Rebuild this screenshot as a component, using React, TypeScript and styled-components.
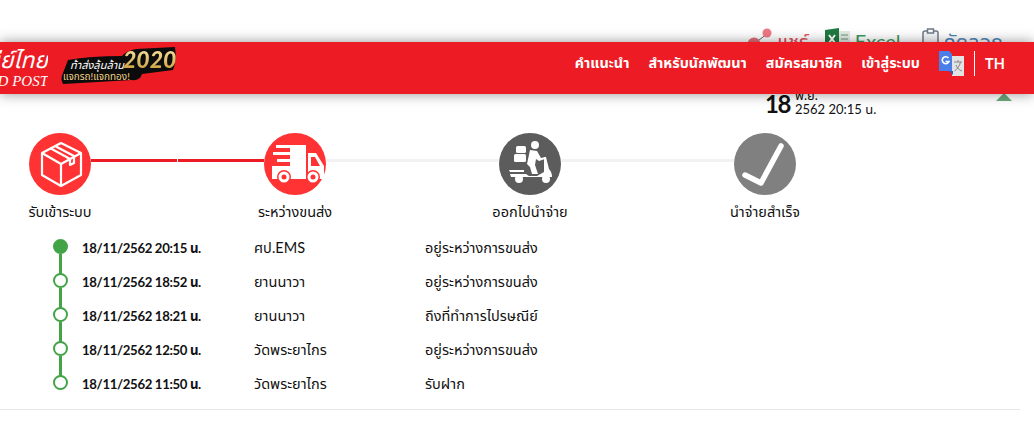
import styled, { createGlobalStyle } from 'styled-components'

const GlobalStyle = createGlobalStyle`
	html, body {
		margin: 0;
		padding: 0;
		background: #fff;
		overflow: hidden;
		font-family: "Lato", "Noto Sans Thai", "Noto Sans", "DejaVu Sans", sans-serif;
		color: #111;
	}
`

const Page = styled.div`
	position: relative;
	height: 428px;
	overflow: hidden;
`

const Header = styled.header`
	position: absolute;
	top: 42px;
	left: 0;
	right: 0;
	z-index: 5;
	height: 52px;
	background: #ed1c24;
	box-shadow: 0 0 12px rgba(0, 0, 0, 0.42);
	display: flex;
	align-items: flex-start;
	justify-content: space-between;
	color: #fff;
`

const Brand = styled.div`
	display: flex;
	align-items: flex-start;
	padding-top: 5px;
	gap: 12px;
`

const Logo = styled.div`
	width: 48px;
	height: 40px;
	overflow: hidden;
	direction: rtl;
	font-family: "Liberation Serif", "Noto Sans Thai", serif;
	font-style: italic;
	white-space: nowrap;
`

const LogoThai = styled.div`
	font-size: 23px;
	line-height: 28px;
`

const LogoEn = styled.div`
	font-size: 15px;
	line-height: 12px;
`

const Nav = styled.nav`
	display: flex;
	align-items: center;
	height: 42px;
	font-size: 14.4px;
	font-weight: 700;
`

const NavItem = styled.a`
	margin-right: 19px;
	white-space: nowrap;
`

const Lang = styled.span`
	margin-left: 10px;
	padding-left: 10px;
	border-left: 1px solid #fff;
	height: 25px;
	line-height: 25px;
	width: 60px;
	box-sizing: border-box;
`

const Toolbar = styled.div`
	height: 42px;
	display: flex;
	align-items: flex-end;
	padding-right: 31px;
	font-size: 20px;
	line-height: 24px;
	overflow: hidden;
`

const Caption = styled.span`
	margin-right: auto;
	margin-bottom: -8px;
	font-size: 11px;
	line-height: 13px;
	color: #555;
`

const Tool = styled.span<{ $color: string; $after: number }>`
	display: flex;
	align-items: center;
	gap: 5px;
	color: ${p => p.$color};
	margin-bottom: -11px;
	margin-right: ${p => p.$after}px;

	svg {
		transform: translateY(-1px);
	}
`

const Summary = styled.div`
	height: 91px;
	padding: 46px 0 0 765px;
	display: flex;
	align-items: flex-start;
	gap: 6px;
	position: relative;
	box-sizing: border-box;
`

const Day = styled.span`
	width: 24px;
	font-size: 24px;
	font-weight: 700;
	line-height: 28px;
	letter-spacing: -1.5px;
	margin-top: 2px;
`

const DateText = styled.div`
	font-size: 13px;
	line-height: 14px;
`

const Arrow = styled.span`
	position: absolute;
	top: 51px;
	right: 22px;
	border-left: 8px solid transparent;
	border-right: 8px solid transparent;
	border-bottom: 8px solid #6aa97c;
`

const Stepper = styled.div`
	display: flex;
	padding-left: 29px;
	height: 98px;
`

const Step = styled.div`
	width: 62px;
	display: flex;
	flex-direction: column;
	align-items: center;
	flex-shrink: 0;
`

const Circle = styled.div<{ $color: string }>`
	width: 62px;
	height: 62px;
	border-radius: 50%;
	background: ${p => p.$color};
	flex-shrink: 0;
	position: relative;
	z-index: 1;
`

const StepLabel = styled.div`
	margin-top: 7px;
	font-size: 14.5px;
	line-height: 20px;
	white-space: nowrap;
`

const Connector = styled.div<{ $done?: boolean }>`
	width: 173px;
	height: 3px;
	margin-top: 26px;
	background: ${p => p.$done
		? 'linear-gradient(to right, #ed1c24 86px, #fff 86px, #fff 87px, #ed1c24 87px)'
		: '#f2f2f2'};
`

const Timeline = styled.div`
	padding-left: 53px;
`

const Row = styled.div`
	position: relative;
	display: grid;
	grid-template-columns: 29px 172px 171px 1fr;
	align-items: center;
	height: 34px;
	padding-top: 2px;
	box-sizing: border-box;
	font-size: 14.5px;
`

const Marker = styled.span<{ $active?: boolean; $last?: boolean }>`
	position: relative;
	width: 15px;
	height: 15px;
	margin-bottom: 6px;
	box-sizing: border-box;
	border-radius: 50%;
	border: 2px solid #43a447;
	background: ${p => (p.$active ? '#43a447' : '#fff')};
	z-index: 1;

	&::after {
		content: '';
		display: ${p => (p.$last ? 'none' : 'block')};
		position: absolute;
		left: 4px;
		top: 13px;
		width: 3px;
		height: 21px;
		background: #43a447;
	}
`

const When = styled.span`
	font-size: 13.2px;
	font-weight: 700;
	letter-spacing: -0.35px;
`

const Divider = styled.hr`
	width: 1020px;
	margin: 8px 0 0;
	border: none;
	border-top: 1px solid #e8e8e8;
`

const StepSvg = styled.svg`
	display: block;
`

const BoxIcon = () => (
	<StepSvg width="62" height="62" viewBox="0 0 62 62" fill="none" stroke="#fff" strokeWidth="2.2" strokeLinejoin="round">
		<path d="M32 10 L52 20 V42 L32 53 L13 42 V20 Z" />
		<path d="M13 20 L32 31 L52 20 M32 31 V53" />
		<path d="M21 15 L41 26 V32 L45 30 V23 L26 13" />
	</StepSvg>
)

const TruckIcon = () => (
	<StepSvg width="62" height="62" viewBox="0 0 62 62" fill="#fff">
		<rect x="26" y="12" width="16" height="34" />
		<rect x="12" y="12" width="14" height="3" />
		<rect x="9" y="19" width="17" height="3" />
		<rect x="13" y="26" width="13" height="3" />
		<rect x="8" y="33" width="18" height="13" />
		<path d="M44 20 H52 L60 33 V46 H44 Z" />
		<path d="M47 24 V33 H56 L51 24 Z" fill="#ff3333" />
		<circle cx="20" cy="44" r="7" fill="#ff3333" />
		<circle cx="20" cy="44" r="5.500" />
		<circle cx="20" cy="44" r="2.500" fill="#ff3333" />
		<circle cx="49" cy="44" r="7" fill="#ff3333" />
		<circle cx="49" cy="44" r="5.500" />
		<circle cx="49" cy="44" r="2.500" fill="#ff3333" />
	</StepSvg>
)

const ScooterIcon = () => (
	<StepSvg width="62" height="62" viewBox="0 0 62 62" fill="#fff">
		<circle cx="36" cy="12" r="4" />
		<rect x="17" y="13" width="10" height="7" rx="1.500" />
		<rect x="15" y="21" width="12" height="8" rx="1.500" />
		<path d="M31 17 L38 18 L42 25 L46 24 V26 L40 28 L37 26 L36 32 L39 41 H33 L31 34 L28 31 Z" />
		<path d="M10 37 H25 V39 H11 Z M11 41 H27 L30 43 H38 L45 39 L45 24 H47 L50 36 Q53 39 53 44 H12 Z" />
		<circle cx="20" cy="46" r="4" />
		<circle cx="47" cy="46" r="4" />
	</StepSvg>
)

const CheckIcon = () => (
	<StepSvg width="62" height="62" viewBox="0 0 62 62" fill="none" stroke="#fff" strokeWidth="5.500" strokeLinecap="round" strokeLinejoin="round">
		<path d="M11 42 L27 50 L47 13" />
	</StepSvg>
)

const ShareIcon = () => (
	<svg width="24" height="24" viewBox="0 0 24 24">
		<path d="M7 15 L19 6" stroke="#667" strokeWidth="1" />
		<circle cx="19" cy="5" r="4.500" fill="#ee7a84" />
		<circle cx="6" cy="16" r="6.500" fill="#e2707a" />
	</svg>
)

const ExcelIcon = () => (
	<svg width="25" height="24" viewBox="0 0 25 24">
		<rect x="12" y="3" width="13" height="18" fill="#e4ebe4" />
		<path d="M16 7 H23 M16 11 H23 M16 15 H23" stroke="#6a9a78" strokeWidth="1" />
		<path d="M0 2 L14 0 V24 L0 22 Z" fill="#1f7a40" />
		<path d="M4 7 L10 15 M10 7 L4 15" stroke="#fff" strokeWidth="2" />
	</svg>
)

const ClipboardIcon = () => (
	<svg width="17" height="24" viewBox="0 0 17 24" fill="none" stroke="#6f7a88" strokeWidth="1.500">
		<rect x="1" y="3" width="15" height="20" rx="2" fill="#f4f6f8" />
		<rect x="5.500" y="1" width="6" height="4" fill="#fff" />
	</svg>
)

const TranslateIcon = () => (
	<svg width="25" height="25" viewBox="0 0 25 25">
		<rect x="13" y="5" width="12" height="20" fill="#e3e3e3" />
		<path d="M0 0 H10 L13 3 V20 H0 Z" fill="#4a7fea" />
		<path d="M10 20 H14 L14 24 Z" fill="#3559b5" />
		<path d="M9.500 7 A3.500 3.500 0 1 0 10 10.500 H6.500" fill="none" stroke="#fff" strokeWidth="1.600" />
		<path d="M15 11 H23 M19 9 V11 M21.500 11 C20.500 15 18.500 18 15.500 20 M17 14 C18 17 20 19 23 20" fill="none" stroke="#888" strokeWidth="1" />
	</svg>
)

const BadgeBox = styled.div`
	position: relative;
	width: 118px;
	height: 38px;
	flex-shrink: 0;
`

const BadgeShape = styled.svg`
	position: absolute;
	inset: 0;
`

const BadgeLine1 = styled.span`
	position: absolute;
	left: 10px;
	top: 11px;
	font-size: 11px;
	line-height: 13px;
	font-style: italic;
	white-space: nowrap;
`

const BadgeLine2 = styled.span`
	position: absolute;
	left: 3px;
	top: 24px;
	font-size: 10px;
	line-height: 11px;
	color: #f0d38a;
	white-space: nowrap;
`

const BadgeYear = styled.span`
	position: absolute;
	left: 63px;
	top: 0;
	font-size: 23px;
	line-height: 24px;
	font-weight: 900;
	font-style: italic;
	background: linear-gradient(to bottom, #fbe9a8, #c89c3a);
	-webkit-background-clip: text;
	background-clip: text;
	color: transparent;
`

const Badge = () => (
	<BadgeBox>
		<BadgeShape width="118" height="38" viewBox="0 0 118 38">
			<path d="M8 13 Q30 9 62 9 Q66 4 76 2 L115 0 Q117 14 113 23 L82 27 Q80 34 72 33 L3 37 Q0 32 3 26 Z" fill="#0c0c0c" />
		</BadgeShape>
		<BadgeLine1>ท้าส่งลุ้นล้าน</BadgeLine1>
		<BadgeLine2>แจกรถ!แจกทอง!</BadgeLine2>
		<BadgeYear>2020</BadgeYear>
	</BadgeBox>
)

type HistoryItem = {
	when: string
	place: string
	status: string
}

const HISTORY: HistoryItem[] = [
	{ when: '18/11/2562 20:15 น.', place: 'ศป.EMS', status: 'อยู่ระหว่างการขนส่ง' },
	{ when: '18/11/2562 18:52 น.', place: 'ยานนาวา', status: 'อยู่ระหว่างการขนส่ง' },
	{ when: '18/11/2562 18:21 น.', place: 'ยานนาวา', status: 'ถึงที่ทำการไปรษณีย์' },
	{ when: '18/11/2562 12:50 น.', place: 'วัดพระยาไกร', status: 'อยู่ระหว่างการขนส่ง' },
	{ when: '18/11/2562 11:50 น.', place: 'วัดพระยาไกร', status: 'รับฝาก' }
]

const App = () => {
	return (
		<Page>
			<GlobalStyle />
			<Toolbar>
				<Caption>ระยะเวลา</Caption>
				<Tool $color="#e2505a" $after={16}><ShareIcon />แชร์</Tool>
				<Tool $color="#3a9a60" $after={21}><ExcelIcon />Excel</Tool>
				<Tool $color="#4f86b8" $after={0}><ClipboardIcon />คัดลอก</Tool>
			</Toolbar>
			<Header>
				<Brand>
					<Logo>
						<LogoThai>ไปรษณีย์ไทย</LogoThai>
						<LogoEn>THAILAND POST</LogoEn>
					</Logo>
					<Badge />
				</Brand>
				<Nav>
					<NavItem>คำแนะนำ</NavItem>
					<NavItem>สำหรับนักพัฒนา</NavItem>
					<NavItem>สมัครสมาชิก</NavItem>
					<NavItem>เข้าสู่ระบบ</NavItem>
					<TranslateIcon />
					<Lang>TH</Lang>
				</Nav>
			</Header>
			<Summary>
				<Day>18</Day>
				<DateText>
					<div>พ.ย.</div>
					<div>2562 20:15 น.</div>
				</DateText>
				<Arrow />
			</Summary>
			<Stepper>
				<Step>
					<Circle $color="#ff3333"><BoxIcon /></Circle>
					<StepLabel>รับเข้าระบบ</StepLabel>
				</Step>
				<Connector $done />
				<Step>
					<Circle $color="#ff3333"><TruckIcon /></Circle>
					<StepLabel>ระหว่างขนส่ง</StepLabel>
				</Step>
				<Connector />
				<Step>
					<Circle $color="#5c5c5c"><ScooterIcon /></Circle>
					<StepLabel>ออกไปนำจ่าย</StepLabel>
				</Step>
				<Connector />
				<Step>
					<Circle $color="#808080"><CheckIcon /></Circle>
					<StepLabel>นำจ่ายสำเร็จ</StepLabel>
				</Step>
			</Stepper>
			<Timeline>
				{HISTORY.map((h, ind) => (
					<Row key={ind}>
						<Marker $active={ind === 0} $last={ind === HISTORY.length - 1} />
						<When>{h.when}</When>
						<span>{h.place}</span>
						<span>{h.status}</span>
					</Row>
				))}
			</Timeline>
			<Divider />
		</Page>
	)
}

export default App
